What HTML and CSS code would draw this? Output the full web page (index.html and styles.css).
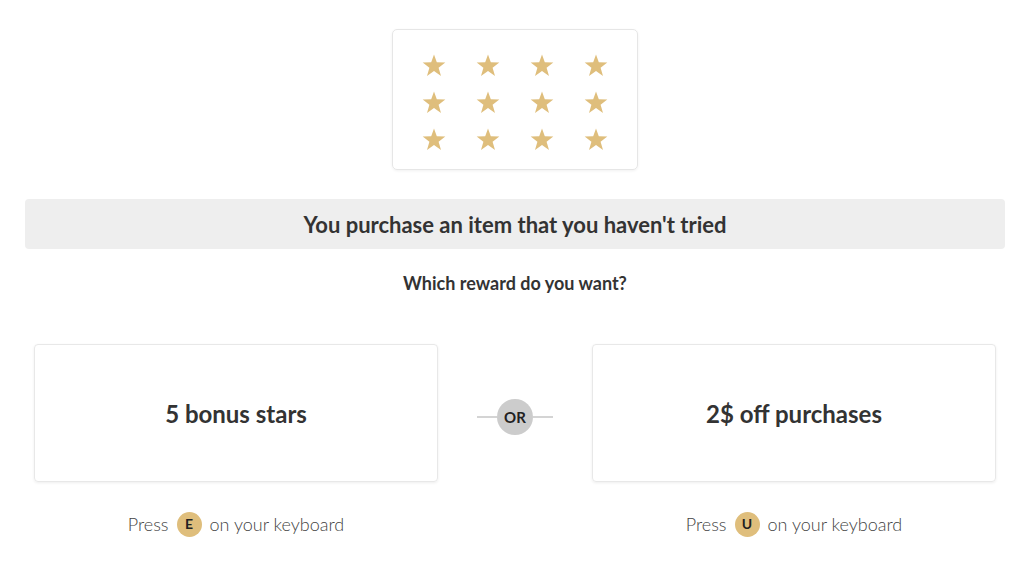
FILE: index.html
```html
<!DOCTYPE html>
<html>
<head>
<meta charset="utf-8">
<link rel="stylesheet" href="styles.css">
</head>
<body>
<svg width="0" height="0" class="defs">
  <defs>
    <symbol id="star" viewBox="0 0 24 23">
      <path d="M12 0.5 L14.8 8.3 L23.3 8.5 L16.6 13.7 L19 22 L12 17.1 L5 22 L7.4 13.7 L0.7 8.5 L9.2 8.3 Z"/>
    </symbol>
  </defs>
</svg>
<main class="page">
  <div class="stars-box">
    <div class="stars-grid">
      <svg class="star"><use href="#star"/></svg>
      <svg class="star"><use href="#star"/></svg>
      <svg class="star"><use href="#star"/></svg>
      <svg class="star"><use href="#star"/></svg>
      <svg class="star"><use href="#star"/></svg>
      <svg class="star"><use href="#star"/></svg>
      <svg class="star"><use href="#star"/></svg>
      <svg class="star"><use href="#star"/></svg>
      <svg class="star"><use href="#star"/></svg>
      <svg class="star"><use href="#star"/></svg>
      <svg class="star"><use href="#star"/></svg>
      <svg class="star"><use href="#star"/></svg>
    </div>
  </div>
  <div class="banner">You purchase an item that you haven't tried</div>
  <div class="question">Which reward do you want?</div>
  <div class="choices">
    <div class="choice">
      <div class="card">5 bonus stars</div>
      <div class="hint">Press <span class="key">E</span> on your keyboard</div>
    </div>
    <div class="or-wrap">
      <span class="or-line"></span>
      <span class="or">OR</span>
      <span class="or-line"></span>
    </div>
    <div class="choice">
      <div class="card">2$ off purchases</div>
      <div class="hint">Press <span class="key">U</span> on your keyboard</div>
    </div>
  </div>
</main>
</body>
</html>
```
FILE: styles.css
```css
html, body {
  margin: 0;
  padding: 0;
  background: #ffffff;
}
body {
  font-family: Lato, "Open Sans", sans-serif;
  color: #333333;
}
.defs {
  position: absolute;
}
.page {
  display: flex;
  flex-direction: column;
  align-items: center;
  padding: 29px 25px 0;
}
.stars-box {
  width: 246px;
  height: 141px;
  box-sizing: border-box;
  border: 1px solid #e6e6e6;
  border-radius: 5px;
  box-shadow: 0 1px 3px rgba(0,0,0,0.06);
  display: flex;
  justify-content: center;
  padding-top: 17px;
}
.stars-grid {
  display: grid;
  grid-template-columns: repeat(4, 54px);
  grid-auto-rows: 37px;
  justify-items: center;
  align-items: center;
}
.star {
  width: 24px;
  height: 23px;
  fill: #dfbe7c;
}
.banner {
  margin-top: 29px;
  width: 100%;
  height: 50px;
  background: #eeeeee;
  border-radius: 4px;
  display: flex;
  align-items: center;
  justify-content: center;
  font-size: 22px;
  font-weight: 700;
  color: #333333;
}
.question {
  margin-top: 23px;
  font-size: 18px;
  font-weight: 700;
  line-height: 22px;
  color: #333333;
}
.choices {
  margin-top: 50px;
  width: 100%;
  box-sizing: border-box;
  padding: 0 9px;
  display: flex;
  justify-content: space-between;
  align-items: flex-start;
}
.choice {
  width: 404px;
  display: flex;
  flex-direction: column;
  align-items: center;
}
.card {
  width: 100%;
  height: 138px;
  box-sizing: border-box;
  border: 1px solid #e8e8e8;
  border-radius: 4px;
  box-shadow: 0 1px 3px rgba(0,0,0,0.07);
  display: flex;
  align-items: center;
  justify-content: center;
  font-size: 24px;
  font-weight: 700;
  color: #333333;
}
.hint {
  margin-top: 29px;
  font-size: 18px;
  font-weight: 300;
  color: #444444;
  display: flex;
  align-items: center;
  gap: 8px;
  line-height: 26px;
}
.key {
  width: 25px;
  height: 25px;
  border-radius: 50%;
  background: #dfbe7c;
  color: #222222;
  font-size: 14px;
  font-weight: 700;
  display: inline-flex;
  align-items: center;
  justify-content: center;
}
.or-wrap {
  height: 138px;
  padding-top: 7px;
  box-sizing: border-box;
  display: flex;
  align-items: center;
  justify-content: center;
  width: 154px;
}
.or-line {
  width: 20px;
  height: 2px;
  background: #d4d4d4;
}
.or {
  width: 36px;
  height: 36px;
  border-radius: 50%;
  background: #cccccc;
  display: flex;
  align-items: center;
  justify-content: center;
  font-size: 15px;
  font-weight: 700;
  color: #222222;
}
```
